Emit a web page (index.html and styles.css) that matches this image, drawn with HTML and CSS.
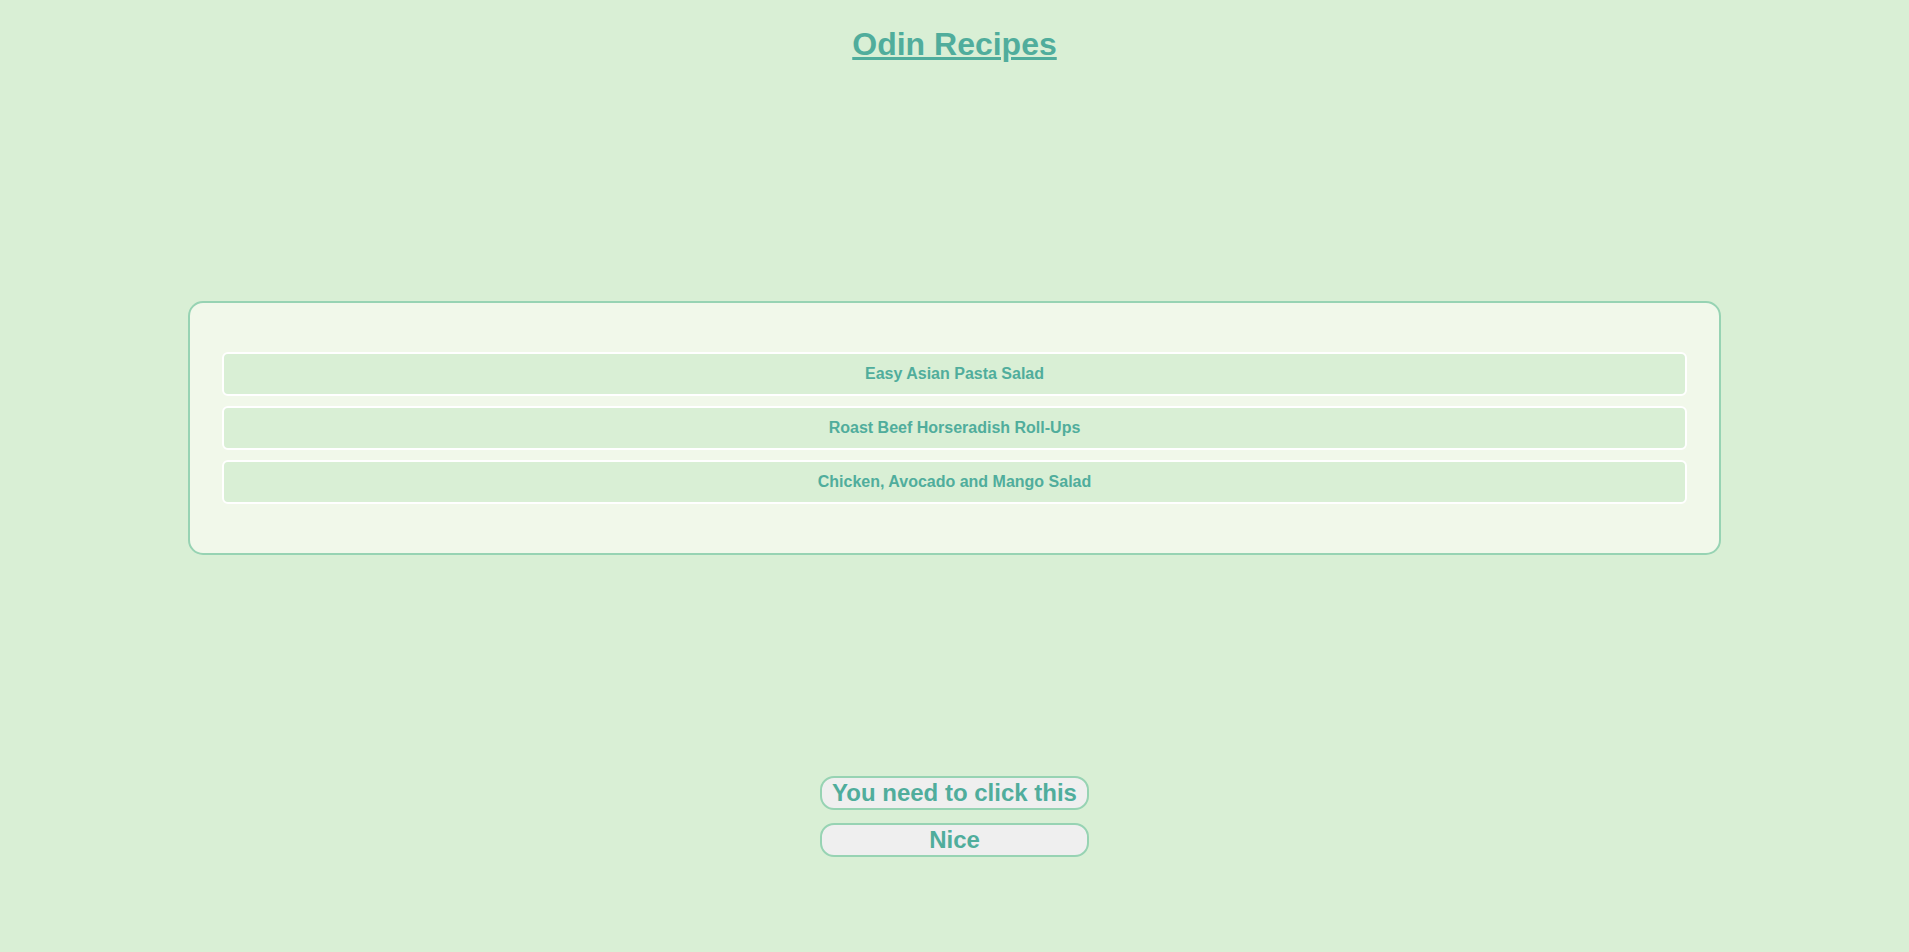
FILE: index.html
```html
<!DOCTYPE html>
<html lang="en">
<head>
<meta charset="utf-8">
<title>Odin Recipes</title>
<link rel="stylesheet" href="styles.css">
</head>
<body>
  <header class="header">
    <h1 class="title"><a class="title-link" href="#">Odin Recipes</a></h1>
  </header>
  <main class="card">
    <ul class="recipe-list">
      <li class="recipe-item"><a class="recipe-link" href="#">Easy Asian Pasta Salad</a></li>
      <li class="recipe-item"><a class="recipe-link" href="#">Roast Beef Horseradish Roll-Ups</a></li>
      <li class="recipe-item"><a class="recipe-link" href="#">Chicken, Avocado and Mango Salad</a></li>
    </ul>
  </main>
  <footer class="actions">
    <button class="btn" type="button">You need to click this</button>
    <button class="btn" type="button">Nice</button>
  </footer>
</body>
</html>
```

FILE: styles.css
```css
html, body {
  margin: 0;
  padding: 0;
}

body {
  background: #d9efd5;
  font-family: "Liberation Sans", Arial, sans-serif;
  color: #50ad9c;
  min-height: 100vh;
  display: flex;
  flex-direction: column;
}

.header {
  text-align: center;
}

.title {
  margin: 26px 0 0;
  font-size: 32px;
  line-height: 37px;
  font-weight: bold;
}

.title-link {
  color: #50ad9c;
  text-decoration: underline;
}

.card {
  margin: 238px 188px 0;
  background: #f1f8ea;
  border: 2px solid #97d3b3;
  border-radius: 15px;
  padding: 49px 32px;
}

.recipe-list {
  list-style: none;
  margin: 0;
  padding: 0;
  display: flex;
  flex-direction: column;
  gap: 10px;
}

.recipe-item {
  background: #d9efd5;
  border: 2px solid #ffffff;
  border-radius: 6px;
  height: 40px;
  display: flex;
  align-items: center;
  justify-content: center;
}

.recipe-link {
  color: #50ad9c;
  font-size: 16px;
  font-weight: bold;
  text-decoration: none;
}

.actions {
  margin: 221px auto 0;
  display: inline-flex;
  flex-direction: column;
  align-self: center;
  gap: 13px;
}

.btn {
  font-family: "Liberation Sans", Arial, sans-serif;
  font-size: 24px;
  font-weight: bold;
  line-height: 28px;
  color: #50ad9c;
  background: #efefef;
  border: 2px solid #97d3b3;
  border-radius: 14px;
  padding: 1px 10px;
  cursor: pointer;
}
```
